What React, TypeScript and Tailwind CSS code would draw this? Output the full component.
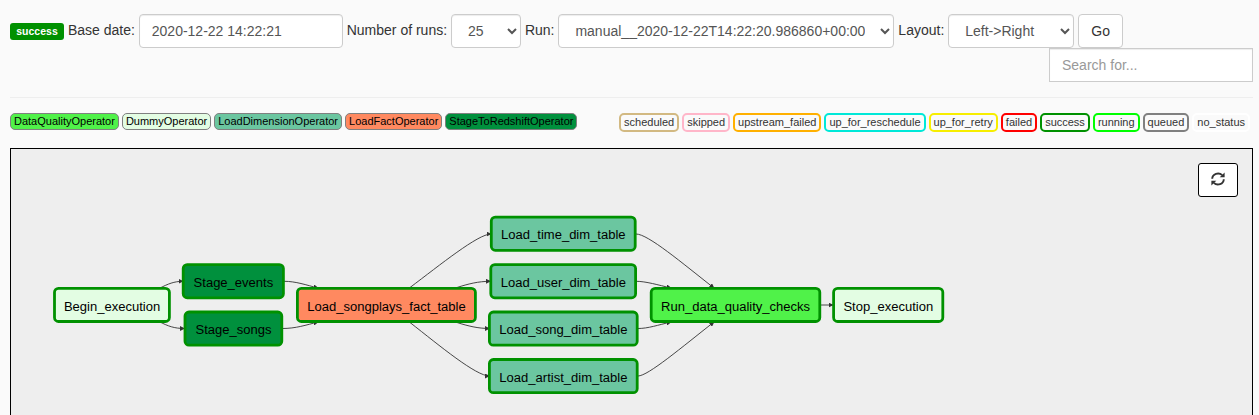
const SELECT =
  "h-[34px] rounded-[4px] border border-[#ccc] bg-white px-3 py-[6px] text-sm text-[#555] outline-none shadow-[inset_0_1px_1px_rgba(0,0,0,0.075)]";

const operators = [
  { name: "DataQualityOperator", cls: "bg-[#50f249]" },
  { name: "DummyOperator", cls: "bg-[#e3fde3]" },
  { name: "LoadDimensionOperator", cls: "bg-[#6bc6a0]" },
  { name: "LoadFactOperator", cls: "bg-[#ff8960]" },
  { name: "StageToRedshiftOperator", cls: "bg-[#00903d]" },
];

const states = [
  { name: "scheduled", cls: "border-[#d2b982]" },
  { name: "skipped", cls: "border-[#ffb6c9]" },
  { name: "upstream_failed", cls: "border-[#ffb000]" },
  { name: "up_for_reschedule", cls: "border-[#00e8d8]" },
  { name: "up_for_retry", cls: "border-[#f7ee00]" },
  { name: "failed", cls: "border-[#ff0000]" },
  { name: "success", cls: "border-[#009100]" },
  { name: "running", cls: "border-[#00ff00]" },
  { name: "queued", cls: "border-[#808080]" },
  { name: "no_status", cls: "border-white" },
];

const nodes = [
  { name: "Begin_execution", x: 54.5, y: 288.3, w: 114.9, ty: 311, fill: "#e3fde3" },
  { name: "Stage_events", x: 183.2, y: 264.6, w: 100.2, ty: 287, fill: "#00903d" },
  { name: "Stage_songs", x: 185, y: 312, w: 96.8, ty: 334, fill: "#00903d" },
  { name: "Load_songplays_fact_table", x: 297.4, y: 288.3, w: 178, ty: 311, fill: "#ff8960" },
  { name: "Load_time_dim_table", x: 491.3, y: 217.1, w: 143.9, ty: 239, fill: "#6bc6a0" },
  { name: "Load_user_dim_table", x: 490.8, y: 264.6, w: 144.8, ty: 287, fill: "#6bc6a0" },
  { name: "Load_song_dim_table", x: 489.4, y: 312, w: 147.8, ty: 334, fill: "#6bc6a0" },
  { name: "Load_artist_dim_table", x: 489.4, y: 359.5, w: 147.8, ty: 382, fill: "#6bc6a0" },
  { name: "Run_data_quality_checks", x: 651.2, y: 288.3, w: 168.6, ty: 311, fill: "#50f249" },
  { name: "Stop_execution", x: 833.6, y: 288.3, w: 109.2, ty: 311, fill: "#e3fde3" },
];

const edges = [
  "M160 288 C168 284 174 281.3 183 281.3",
  "M160 322 C168 326 174 328.5 184.5 328.5",
  "M284 281.3 C296 281.3 306 285 318 288",
  "M282 328.5 C296 328.5 306 325 318 322",
  "M410 287.5 C440 265 478 234 491 234",
  "M457 287.5 C468 284 478 281.3 490.5 281.3",
  "M457 322.5 C468 326 478 328.5 489.5 328.5",
  "M410 322.5 C440 346 476 376 489.5 376",
  "M636 234 C648 234 682 263 714 288",
  "M636 281.3 C646 281.3 658 285 671 288",
  "M638 328.5 C648 328.5 658 325 671 322",
  "M638 376 C648 376 682 347 714 322",
  "M820 305 L833 305",
];

function Label({ children }: { children: string }) {
  return <span className="-mt-[2px] whitespace-nowrap">{children}</span>;
}

export default function App() {
  return (
    <div className="flex h-[415px] w-full flex-col overflow-hidden bg-[#fafafa] pl-[10px] pr-[6px] pt-[14px] font-['Liberation_Sans',Arial,sans-serif] text-sm leading-5 text-[#333]">
      <div className="flex h-[34px] shrink-0 items-center gap-[3.93px]">
        <span className="mt-px flex h-[17px] w-[54px] items-center justify-center rounded-[3px] bg-[#009100] pb-px text-[10.5px] font-bold text-white">
          success
        </span>
        <Label>Base date:</Label>
        <input
          defaultValue="2020-12-22 14:22:21"
          className="h-[34px] w-[204px] rounded-[4px] border border-[#ccc] bg-white px-3 text-[#555] shadow-[inset_0_1px_1px_rgba(0,0,0,0.075)]"
        />
        <Label>Number of runs:</Label>
        <select className={`${SELECT} w-[70px]`}>
          <option>25</option>
        </select>
        <Label>Run:</Label>
        <select className={`${SELECT} w-[336px]`}>
          <option>manual__2020-12-22T14:22:20.986860+00:00</option>
        </select>
        <Label>Layout:</Label>
        <select className={`${SELECT} w-[126px]`}>
          <option>{"Left->Right"}</option>
        </select>
        <button className="h-[34px] w-[45px] rounded-[4px] border border-[#ccc] bg-white">Go</button>
      </div>
      <div className="flex shrink-0 justify-end">
        <input
          placeholder="Search for..."
          className="h-[34px] w-[204px] border border-[#ccc] bg-white px-3 placeholder:text-[#999] shadow-[inset_0_1px_1px_rgba(0,0,0,0.075)]"
        />
      </div>
      <hr className="mt-[15px] shrink-0 border-[#eee]" />
      <div className="mt-[15px] flex h-[35px] shrink-0 items-start justify-between pr-[3px] text-[11px]">
        <div className="flex gap-[3px]">
          {operators.map((o) => (
            <span
              key={o.name}
              className={`h-[17px] rounded-[5px] border border-[#808080] px-[3px] leading-[15px] text-black ${o.cls}`}
            >
              {o.name}
            </span>
          ))}
        </div>
        <div className="flex gap-[3px]">
          {states.map((s) => (
            <span key={s.name} className={`h-[19px] rounded-[5px] border-2 px-[3px] leading-[15px] ${s.cls}`}>
              {s.name}
            </span>
          ))}
        </div>
      </div>
      <div className="relative h-[300px] shrink-0 border border-black bg-[#eee]">
        <svg width="1241" height="266" viewBox="11 149 1241 266" className="block">
          <defs>
            <marker id="arrow" viewBox="0 0 10 10" refX="9" refY="5" markerWidth="5" markerHeight="5" markerUnits="userSpaceOnUse" orient="auto">
              <path d="M0 0 L10 5 L0 10 z" fill="#333" />
            </marker>
          </defs>
          {edges.map((d) => (
            <path key={d} d={d} fill="none" stroke="#333" strokeWidth="0.9" markerEnd="url(#arrow)" />
          ))}
          {nodes.map((n) => (
            <g key={n.name}>
              <rect x={n.x} y={n.y} width={n.w} height="33.2" rx="4" fill={n.fill} stroke="#009100" strokeWidth="2.8" />
              <text x={n.x + n.w / 2 + 0.1} y={n.ty} textAnchor="middle" fontSize="13.03" fill="#000">
                {n.name}
              </text>
            </g>
          ))}
        </svg>
        <button
          aria-label="Refresh"
          className="absolute right-[14px] top-[14px] flex h-[34px] w-10 items-center justify-center rounded-[3px] border border-black bg-white pb-[2px] text-[#333]"
        >
          <svg width="14" height="14" viewBox="0 0 14 14" fill="none" stroke="currentColor" strokeWidth="1.9">
            <path d="M1.2 6.8 A5.8 5.5 0 0 1 11.2 3.2" />
            <path d="M12.8 7.2 A5.8 5.5 0 0 1 2.8 10.8" />
            <path d="M13.6 0.6 V5.3 H8.7 z" fill="currentColor" stroke="none" />
            <path d="M0.4 13.4 V8.7 H5.3 z" fill="currentColor" stroke="none" />
          </svg>
        </button>
      </div>
    </div>
  );
}
